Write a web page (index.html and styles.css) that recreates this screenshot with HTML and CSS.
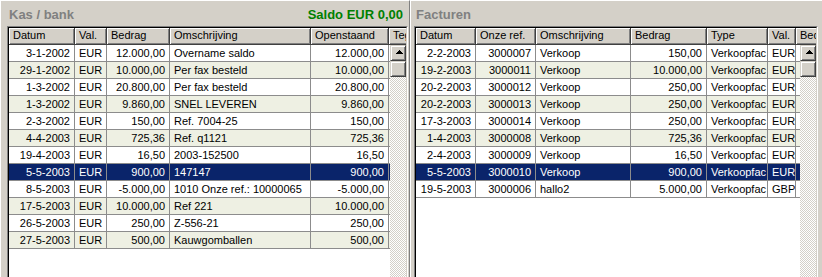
FILE: index.html
```html
<!DOCTYPE html>
<html lang="nl">
<head>
  <meta charset="UTF-8">
  <title>Kas / bank - Facturen</title>
  <link rel="stylesheet" href="styles.css">
</head>
<body>
  <div class="app">
    <!-- Kas / bank -->
    <section class="panel panel-kas">
      <div class="panel-head">
        <span class="panel-title">Kas / bank</span>
        <span class="saldo">Saldo EUR 0,00</span>
      </div>
      <div class="grid grid-kas">
        <div class="grid-frame">
          <div class="grid-header">
            <div class="hcell k-datum">Datum</div>
            <div class="hcell k-val">Val.</div>
            <div class="hcell k-bedrag">Bedrag</div>
            <div class="hcell k-oms">Omschrijving</div>
            <div class="hcell k-open">Openstaand</div>
            <div class="hcell k-teg">Teg</div>
          </div>
          <div class="grid-body">
            <div class="rows">
              <div class="row"><div class="cell k-datum num">3-1-2002</div><div class="cell k-val">EUR</div><div class="cell k-bedrag num">12.000,00</div><div class="cell k-oms">Overname saldo</div><div class="cell k-open num">12.000,00</div><div class="cell k-teg"></div></div>
              <div class="row"><div class="cell k-datum num">29-1-2002</div><div class="cell k-val">EUR</div><div class="cell k-bedrag num">10.000,00</div><div class="cell k-oms">Per fax besteld</div><div class="cell k-open num">10.000,00</div><div class="cell k-teg"></div></div>
              <div class="row"><div class="cell k-datum num">1-3-2002</div><div class="cell k-val">EUR</div><div class="cell k-bedrag num">20.800,00</div><div class="cell k-oms">Per fax besteld</div><div class="cell k-open num">20.800,00</div><div class="cell k-teg"></div></div>
              <div class="row"><div class="cell k-datum num">1-3-2002</div><div class="cell k-val">EUR</div><div class="cell k-bedrag num">9.860,00</div><div class="cell k-oms">SNEL LEVEREN</div><div class="cell k-open num">9.860,00</div><div class="cell k-teg"></div></div>
              <div class="row"><div class="cell k-datum num">2-3-2002</div><div class="cell k-val">EUR</div><div class="cell k-bedrag num">150,00</div><div class="cell k-oms">Ref. 7004-25</div><div class="cell k-open num">150,00</div><div class="cell k-teg"></div></div>
              <div class="row"><div class="cell k-datum num">4-4-2003</div><div class="cell k-val">EUR</div><div class="cell k-bedrag num">725,36</div><div class="cell k-oms">Ref. q1121</div><div class="cell k-open num">725,36</div><div class="cell k-teg"></div></div>
              <div class="row"><div class="cell k-datum num">19-4-2003</div><div class="cell k-val">EUR</div><div class="cell k-bedrag num">16,50</div><div class="cell k-oms">2003-152500</div><div class="cell k-open num">16,50</div><div class="cell k-teg"></div></div>
              <div class="row selected"><div class="cell k-datum num">5-5-2003</div><div class="cell k-val">EUR</div><div class="cell k-bedrag num">900,00</div><div class="cell k-oms">147147</div><div class="cell k-open num">900,00</div><div class="cell k-teg"></div></div>
              <div class="row"><div class="cell k-datum num">8-5-2003</div><div class="cell k-val">EUR</div><div class="cell k-bedrag num">-5.000,00</div><div class="cell k-oms">1010 Onze ref.: 10000065</div><div class="cell k-open num">-5.000,00</div><div class="cell k-teg"></div></div>
              <div class="row"><div class="cell k-datum num">17-5-2003</div><div class="cell k-val">EUR</div><div class="cell k-bedrag num">10.000,00</div><div class="cell k-oms">Ref 221</div><div class="cell k-open num">10.000,00</div><div class="cell k-teg"></div></div>
              <div class="row"><div class="cell k-datum num">26-5-2003</div><div class="cell k-val">EUR</div><div class="cell k-bedrag num">250,00</div><div class="cell k-oms">Z-556-21</div><div class="cell k-open num">250,00</div><div class="cell k-teg"></div></div>
              <div class="row"><div class="cell k-datum num">27-5-2003</div><div class="cell k-val">EUR</div><div class="cell k-bedrag num">500,00</div><div class="cell k-oms">Kauwgomballen</div><div class="cell k-open num">500,00</div><div class="cell k-teg"></div></div>
            </div>
            <div class="vscroll">
              <div class="sb-btn">
                <svg width="14" height="14" shape-rendering="crispEdges"><rect x="8" y="4" width="1" height="1"/><rect x="7" y="5" width="3" height="1"/><rect x="6" y="6" width="5" height="1"/><rect x="5" y="7" width="7" height="1"/></svg>
              </div>
              <div class="sb-thumb"></div>
            </div>
          </div>
        </div>
      </div>
    </section>

    <!-- Facturen -->
    <section class="panel panel-fact">
      <div class="panel-head">
        <span class="panel-title">Facturen</span>
      </div>
      <div class="grid grid-fact">
        <div class="grid-frame">
          <div class="grid-header">
            <div class="hcell f-datum">Datum</div>
            <div class="hcell f-ref">Onze ref.</div>
            <div class="hcell f-oms">Omschrijving</div>
            <div class="hcell f-bedrag">Bedrag</div>
            <div class="hcell f-type">Type</div>
            <div class="hcell f-val">Val.</div>
            <div class="hcell f-bed">Bed</div>
          </div>
          <div class="grid-body">
            <div class="rows">
              <div class="row"><div class="cell f-datum num">2-2-2003</div><div class="cell f-ref num">3000007</div><div class="cell f-oms">Verkoop</div><div class="cell f-bedrag num">150,00</div><div class="cell f-type">Verkoopfac</div><div class="cell f-val">EUR</div><div class="cell f-bed"></div></div>
              <div class="row"><div class="cell f-datum num">19-2-2003</div><div class="cell f-ref num">3000011</div><div class="cell f-oms">Verkoop</div><div class="cell f-bedrag num">10.000,00</div><div class="cell f-type">Verkoopfac</div><div class="cell f-val">EUR</div><div class="cell f-bed"></div></div>
              <div class="row"><div class="cell f-datum num">20-2-2003</div><div class="cell f-ref num">3000012</div><div class="cell f-oms">Verkoop</div><div class="cell f-bedrag num">250,00</div><div class="cell f-type">Verkoopfac</div><div class="cell f-val">EUR</div><div class="cell f-bed"></div></div>
              <div class="row"><div class="cell f-datum num">20-2-2003</div><div class="cell f-ref num">3000013</div><div class="cell f-oms">Verkoop</div><div class="cell f-bedrag num">250,00</div><div class="cell f-type">Verkoopfac</div><div class="cell f-val">EUR</div><div class="cell f-bed"></div></div>
              <div class="row"><div class="cell f-datum num">17-3-2003</div><div class="cell f-ref num">3000014</div><div class="cell f-oms">Verkoop</div><div class="cell f-bedrag num">250,00</div><div class="cell f-type">Verkoopfac</div><div class="cell f-val">EUR</div><div class="cell f-bed"></div></div>
              <div class="row"><div class="cell f-datum num">1-4-2003</div><div class="cell f-ref num">3000008</div><div class="cell f-oms">Verkoop</div><div class="cell f-bedrag num">725,36</div><div class="cell f-type">Verkoopfac</div><div class="cell f-val">EUR</div><div class="cell f-bed"></div></div>
              <div class="row"><div class="cell f-datum num">2-4-2003</div><div class="cell f-ref num">3000009</div><div class="cell f-oms">Verkoop</div><div class="cell f-bedrag num">16,50</div><div class="cell f-type">Verkoopfac</div><div class="cell f-val">EUR</div><div class="cell f-bed"></div></div>
              <div class="row selected"><div class="cell f-datum num">5-5-2003</div><div class="cell f-ref num">3000010</div><div class="cell f-oms">Verkoop</div><div class="cell f-bedrag num">900,00</div><div class="cell f-type">Verkoopfac</div><div class="cell f-val">EUR</div><div class="cell f-bed"></div></div>
              <div class="row"><div class="cell f-datum num">19-5-2003</div><div class="cell f-ref num">3000006</div><div class="cell f-oms">hallo2</div><div class="cell f-bedrag num">5.000,00</div><div class="cell f-type">Verkoopfac</div><div class="cell f-val">GBP</div><div class="cell f-bed"></div></div>
            </div>
            <div class="vscroll">
              <div class="sb-btn">
                <svg width="14" height="14" shape-rendering="crispEdges"><rect x="8" y="4" width="1" height="1"/><rect x="7" y="5" width="3" height="1"/><rect x="6" y="6" width="5" height="1"/><rect x="5" y="7" width="7" height="1"/></svg>
              </div>
              <div class="sb-thumb"></div>
            </div>
          </div>
        </div>
      </div>
    </section>
  </div>
</body>
</html>
```

FILE: styles.css
```css
body {
  margin: 0;
  background: #d4d0c8;
  font-family: 'Liberation Sans', Arial, sans-serif;
  font-size: 11px;
  color: #000;
  overflow: hidden;
}
.app {
  display: flex;
  height: 277px;
  overflow: hidden;
}
.panel {
  background: #d4d0c8;
  display: flex;
  flex-direction: column;
  box-sizing: border-box;
  border-top: 1px solid #fff;
}
.panel-kas {
  width: 410px;
  padding-left: 6px;
  border-left: 1px solid #fff;
  border-right: 1px solid #808080;
}
.panel-fact {
  flex: 1;
  padding-left: 3px;
  border-left: 1px solid #fff;
}
.panel-head {
  height: 25px;
  flex: none;
  box-sizing: border-box;
  padding: 6px 6px 0 2px;
  display: flex;
  justify-content: space-between;
  font-size: 13px;
  font-weight: bold;
  line-height: 16px;
}
.panel-title { color: #808080; }
.saldo { color: #008000; }

/* grid with sunken frame */
.grid {
  flex: none;
  height: 300px;
  box-sizing: border-box;
  border: 1px solid;
  border-color: #808080 #fff #fff #808080;
}
.grid-kas { width: 401px; }
.grid-fact { width: 404px; }
.grid-frame {
  height: 100%;
  box-sizing: border-box;
  border: 1px solid;
  border-color: #000 #d4d0c8 #d4d0c8 #000;
  display: flex;
  flex-direction: column;
  background: #fff;
}
.grid-header {
  display: flex;
  flex: none;
  height: 17px;
  overflow: hidden;
}
.hcell {
  flex: none;
  box-sizing: border-box;
  height: 17px;
  line-height: 15px;
  padding: 0 3px 0 4px;
  background: #d4d0c8;
  border-right: 1px solid #404040;
  border-bottom: 1px solid #404040;
  box-shadow: inset 1px 1px #fff, inset -1px -1px #808080;
  white-space: nowrap;
  overflow: hidden;
}
.grid-body {
  flex: 1;
  display: flex;
  min-height: 0;
}
.rows { flex: 1; overflow: hidden; }
.row { display: flex; height: 17px; background: #fff; }
.row:nth-child(even) { background: #eef0e3; }
.row.selected { background: #0a246a; color: #fff; }
.cell {
  flex: none;
  box-sizing: border-box;
  height: 17px;
  line-height: 16px;
  padding: 0 1px 0 4px;
  border-right: 1px solid #8c8c8c;
  border-bottom: 1px solid #8c8c8c;
  white-space: nowrap;
  overflow: hidden;
}
.cell.num { text-align: right; padding-right: 4px; }

/* column widths */
.k-datum { width: 66px; }
.k-val { width: 32px; }
.k-bedrag { width: 63px; }
.k-oms { width: 141px; }
.k-open { width: 78px; }
.k-teg { width: 100px; }
.f-datum { width: 60px; }
.f-ref { width: 60px; }
.f-oms { width: 95px; }
.f-bedrag { width: 76px; }
.f-type { width: 61px; }
.f-val { width: 28px; }
.f-bed { width: 100px; }

/* vertical scrollbar */
.vscroll {
  flex: none;
  width: 16px;
  background: repeating-conic-gradient(#d4d0c8 0% 25%, #fff 0% 50%) 0 0 / 2px 2px;
}
.sb-btn, .sb-thumb {
  height: 16px;
  box-sizing: border-box;
  background: #d4d0c8;
  border: 1px solid;
  border-color: #d4d0c8 #404040 #404040 #d4d0c8;
  box-shadow: inset 1px 1px #fff, inset -1px -1px #808080;
}
.sb-btn svg { display: block; }
```
